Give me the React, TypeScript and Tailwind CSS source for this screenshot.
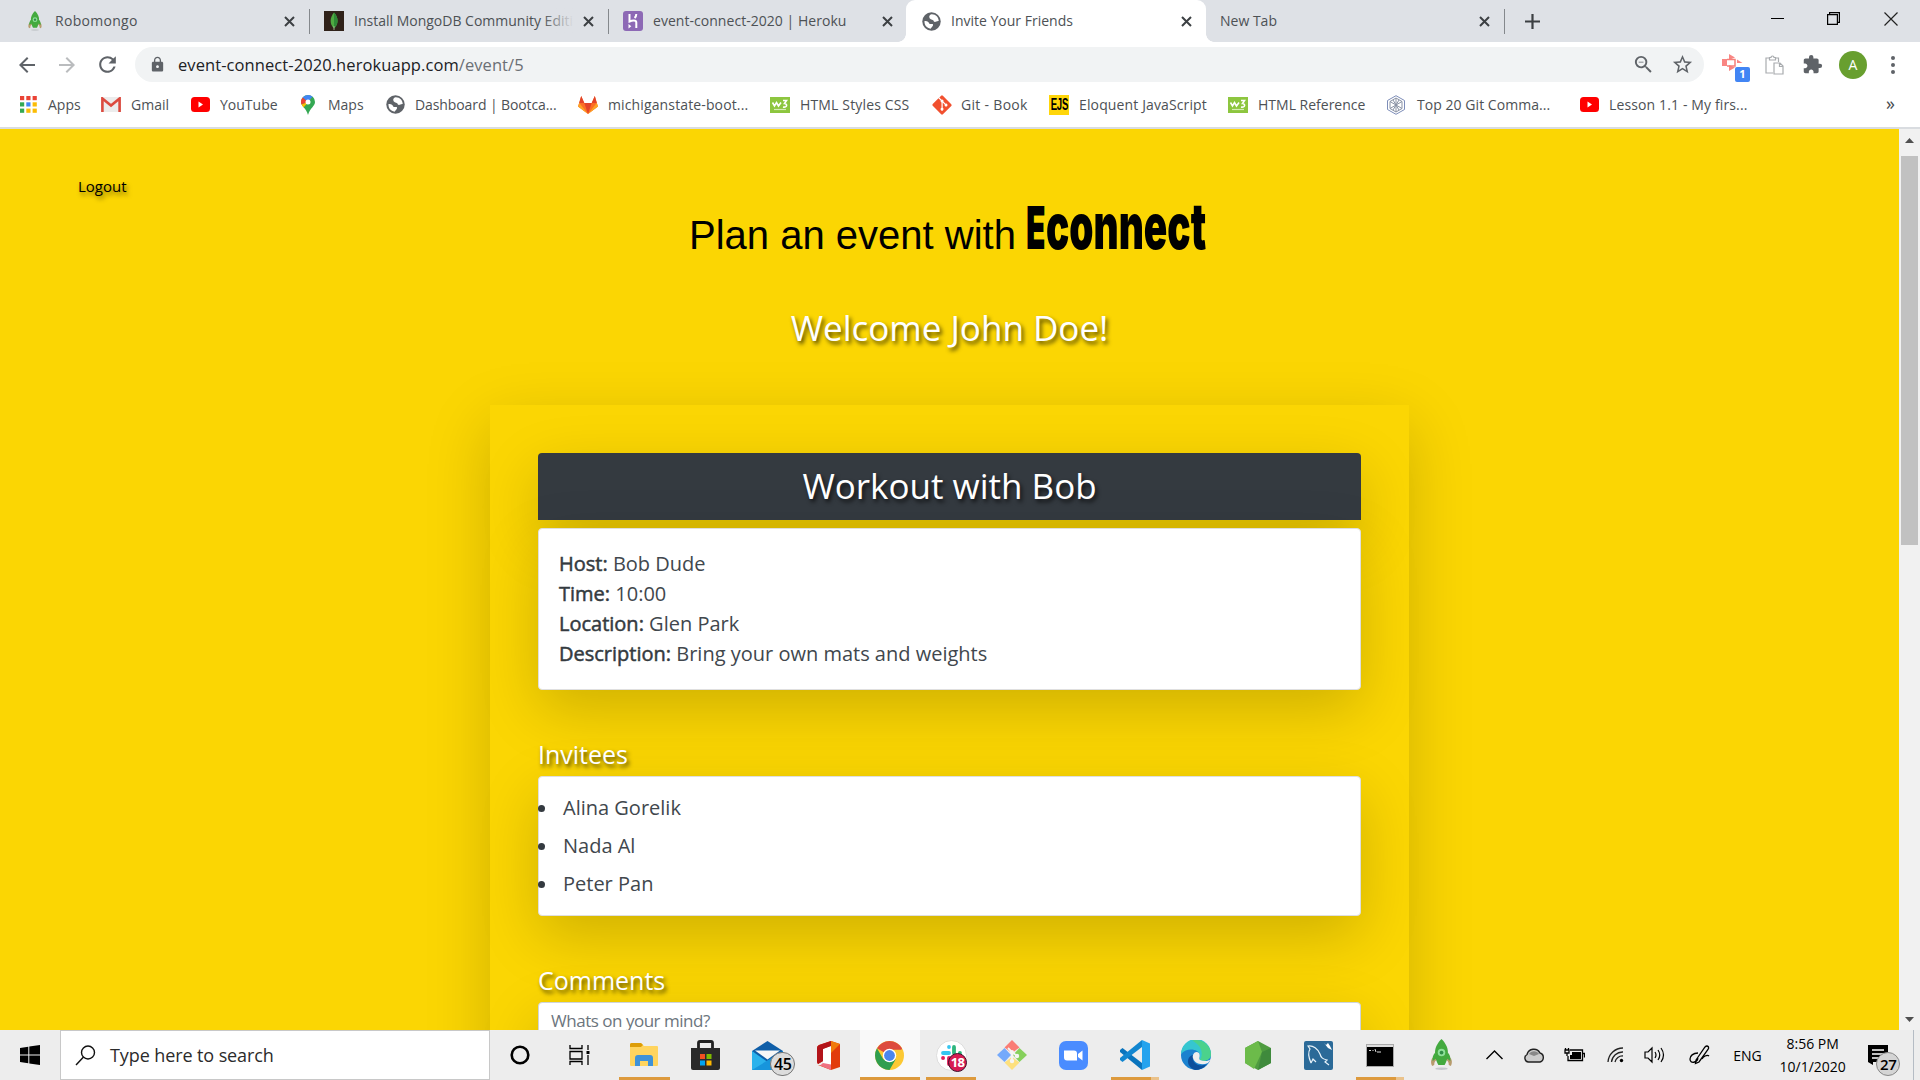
import type { ReactNode } from "react";
import { FaGitAlt } from "react-icons/fa";
import { MdExtension, MdLock, MdStarBorder, MdArrowBack, MdArrowForward, MdRefresh, MdOutlineZoomOut } from "react-icons/md";

function Rocket({ s = 22 }: { s?: number }) {
  return (
    <svg width={s} height={s * 1.25} viewBox="0 0 24 30">
      <ellipse cx="12" cy="28.5" rx="6" ry="1.2" fill="#c4c8cc" />
      <path d="M6 16C2 18 1 22 3 26L5 25C5 22 6 21 8 20ZM18 16C22 18 23 22 21 26L19 25C19 22 18 21 16 20Z" fill="#b79b6d" />
      <path d="M12 0C16 4 19 9 18 15C18 19 16 23 15 25H9C8 23 6 19 6 15C5 9 8 4 12 0Z" fill="#43aa3f" />
      <path d="M6 13C4 15 3 18 3.500 21L8 18ZM18 13C20 15 21 18 20.500 21L16 18Z" fill="#43aa3f" />
      <circle cx="12" cy="13" r="3.6" fill="#8fe09a" />
      <circle cx="12" cy="13" r="1.8" fill="#2f8f46" />
    </svg>
  );
}
function Globe() {
  return (
    <svg width="19" height="19" viewBox="0 0 20 20">
      <circle cx="10" cy="10" r="9.7" fill="#5f6368" />
      <path d="M2.6 9.5C5 9 7 10 8 12.500H11.500V14.500L9 17.500C5 17 2.400 14 2.600 9.500ZM10 2.400C8 3 7 4.500 8 6.500C9.500 8.500 12 7.500 12.500 10C14 11.500 15.500 9 17.600 9.500C17.500 5.500 14.500 2.200 10 2.400Z" fill="#fff" />
    </svg>
  );
}
function Heroku() {
  return (
    <svg width="20" height="20" viewBox="0 0 20 20">
      <rect width="20" height="20" rx="3" fill="#8d69b5" />
      <path d="M6.500 3V10.500C9 9.300 13.300 8.600 13.300 11.500V17M13.300 3C13.300 4.800 12.600 6 11.600 7" stroke="#fff" strokeWidth="2" fill="none" />
      <path d="M5.500 13L8.300 15.200L5.500 17.500Z" fill="#fff" />
    </svg>
  );
}
function MongoLeaf() {
  return (
    <svg width="20" height="20" viewBox="0 0 20 20">
      <rect width="20" height="20" fill="#30221a" />
      <path d="M10 1.500C15 7 14.500 13 10 17.500C5.500 13 5.500 7 10 1.500Z" fill="#4faa41" />
      <path d="M10 1.500C15 7 14.500 13 10 17.500Z" fill="#2f8a37" />
      <path d="M10 15V19" stroke="#b8c4a2" strokeWidth=".8" />
    </svg>
  );
}
const GitLab = () => (
  <svg width="20" height="18" viewBox="0 0 20 18">
    <path d="M10 18L0 10.500L3.200 0L6.300 7H13.700L16.800 0L20 10.500Z" fill="#fc6d26" />
    <path d="M10 18L6.300 7H13.700Z" fill="#e24329" />
    <path d="M0 10.500L1.300 7L10 18ZM20 10.500L18.700 7L10 18Z" fill="#fca326" />
    <path d="M3.200 0L6.300 7H1.200ZM16.800 0L18.800 7H13.700Z" fill="#e24329" />
  </svg>
);
const Close = () => (
  <svg width="11" height="11" viewBox="0 0 11 11" className="shrink-0">
    <path d="M1 1L10 10M10 1L1 10" stroke="#3c4043" strokeWidth="2" />
  </svg>
);
function AppsGrid() {
  const c = ["#ea4335", "#ea4335", "#ea4335", "#34a853", "#4285f4", "#fbbc05", "#34a853", "#fbbc05", "#fbbc05"];
  return (
    <svg width="17" height="17" viewBox="0 0 17 17">
      {c.map((f, i) => (
        <rect key={i} x={(i % 3) * 6.3} y={Math.floor(i / 3) * 6.3} width="4.2" height="4.2" fill={f} />
      ))}
    </svg>
  );
}
const Gmail = () => (
  <svg width="20" height="15" viewBox="0 0 20 15">
    <rect width="20" height="15" rx="1.5" fill="#ececec" />
    <path d="M1.400 15V1.500L10 8.500L18.600 1.500V15" stroke="#dc4a3f" strokeWidth="2.600" fill="none" />
  </svg>
);
const YouTube = () => (
  <svg width="19" height="15" viewBox="0 0 19 15">
    <rect width="19" height="15" rx="3.500" fill="#f00" />
    <path d="M7.500 4.500L12 7.500L7.500 10.500Z" fill="#fff" />
  </svg>
);
const MapPin = () => (
  <svg width="14" height="20" viewBox="0 0 14 20">
    <path d="M7 0A7 7 0 0 0 0 7C0 11 5 13 7 20C9 13 14 11 14 7A7 7 0 0 0 7 0Z" fill="#34a853" />
    <path d="M7 0A7 7 0 0 0 1.600 2.500L7 7L11.500 1.600A7 7 0 0 0 7 0Z" fill="#4285f4" />
    <path d="M1.600 2.500A7 7 0 0 0 .5 9.500L7 7Z" fill="#ea4335" />
    <path d="M.5 9.500L2.500 12.500L11 3L7 7Z" fill="#fbbc04" />
    <circle cx="7" cy="7" r="2.500" fill="#fff" />
  </svg>
);
const W3 = () => (
  <svg width="20" height="16" viewBox="0 0 20 16">
    <rect width="20" height="16" fill="#8dc63f" />
    <path d="M2.500 5.500L4.500 9L6.500 5.500L8.500 9L11 5.500M13 3.500H16.500L14.500 6.500C17.500 6.500 17.500 11 13 10" stroke="#fff" strokeWidth="1.600" fill="none" />
    <path d="M4 12.500H16" stroke="#d5ecb4" strokeWidth="1.200" />
  </svg>
);
const Ejs = () => (
  <span className="flex h-5 w-5 items-center justify-center bg-[#ffd60a] font-['Liberation_Sans'] text-[16px] font-bold tracking-[-0.5px] text-black">
    <span className="scale-x-[.6]">EJS</span>
  </span>
);
const Hex = () => (
  <svg width="20" height="20" viewBox="0 0 20 20" fill="none" stroke="#7d8db8" strokeWidth="1">
    <path d="M10 .7L18.500 5.500V14.500L10 19.300L1.500 14.500V5.500Z" />
    <path d="M10 3L16 6.500V13.500L10 17L4 13.500V6.500ZM10 3V17M4 6.500L16 13.500M16 6.500L4 13.500M7 5L13 15M13 5L7 15" stroke="#8b93a5" />
  </svg>
);

const tabText = "whitespace-nowrap text-[14px] leading-5 text-[#4d5155]";

function Tab({ icon, title, w, ls }: { icon?: ReactNode; title: string; w: string; ls: string }) {
  return (
    <div className={"flex h-[42px] shrink-0 items-center " + w}>
      {icon && <span className="mr-[10px] flex w-5 shrink-0 justify-center">{icon}</span>}
      <span className={"min-w-0 flex-1 overflow-hidden " + tabText + " " + ls}>{title}</span>
      <Close />
    </div>
  );
}
const Sep = ({ m }: { m: string }) => <span className={"h-[25px] w-px shrink-0 self-center bg-[#84888c] " + m} />;

function TabStrip() {
  return (
    <div className="flex h-[42px] items-center bg-[#dee1e6]">
      <Tab icon={<Rocket s={16} />} title="Robomongo" w="ml-[25px] w-[270px]" ls="tracking-[0.3px]" />
      <Sep m="ml-[14px]" />
      <div className="relative ml-[14px]">
        <Tab icon={<MongoLeaf />} title="Install MongoDB Community Edition" w="w-[270px]" ls="max-w-[219px] mr-[10px]" />
        <span className="absolute top-2 right-[20px] h-7 w-8 bg-gradient-to-r from-transparent to-[#dee1e6]" />
      </div>
      <Sep m="ml-[14px]" />
      <Tab icon={<Heroku />} title="event-connect-2020 | Heroku" w="ml-[14px] w-[270px]" ls="tracking-[0.04px]" />
      <div className="relative ml-[13px] h-[42px] w-[300px] rounded-t-[9px] bg-white pl-[15px]">
        <span className="absolute bottom-0 -left-[8px] h-2 w-2 bg-[radial-gradient(circle_at_0_0,transparent_7.500px,white_8px)]" />
        <span className="absolute -right-[8px] bottom-0 h-2 w-2 bg-[radial-gradient(circle_at_100%_0,transparent_7.500px,white_8px)]" />
        <Tab icon={<Globe />} title="Invite Your Friends" w="w-[271px]" ls="" />
      </div>
      <Tab title="New Tab" w="ml-[14px] w-[270px]" ls="" />
      <Sep m="ml-[14px]" />
      <svg width="15" height="15" viewBox="0 0 15 15" className="ml-[20px]">
        <path d="M7.500 0V15M0 7.500H15" stroke="#3c4043" strokeWidth="2.200" />
      </svg>
      <svg width="13" height="14" viewBox="0 0 13 14" className="ml-[231px] mb-[6px]">
        <path d="M0 7.500H13" stroke="#000" />
      </svg>
      <svg width="13" height="13" viewBox="0 0 13 13" className="ml-[43px] mb-[5px]" fill="none" stroke="#000" strokeWidth="1.200">
        <path d="M.6 2.600H10.400V12.400H.6ZM2.600 2.600V.6H12.400V10.400H10.400" />
      </svg>
      <svg width="14" height="14" viewBox="0 0 14 14" className="ml-[44px] mb-[5px]">
        <path d="M.5 .5L13.500 13.500M13.500 .5L.5 13.500" stroke="#222" strokeWidth="1.200" />
      </svg>
    </div>
  );
}

function AddressBar() {
  return (
    <div className="flex h-[45px] items-center bg-white text-[#5f6368]">
      <MdArrowBack className="ml-[15px]" size={24} />
      <MdArrowForward className="ml-[16px] text-[#babcbe]" size={24} />
      <MdRefresh className="ml-[16px]" size={25} />
      <div className="ml-[15px] flex h-[35px] w-[1569px] items-center rounded-full bg-[#f1f3f4] pl-[14px]">
        <MdLock size={17} />
        <span className="ml-[12px] flex-1 text-[16.5px] leading-6 tracking-[0.08px] text-[#202124]">
          event-connect-2020.herokuapp.com<span className="text-[#6b6f74]">/event/5</span>
        </span>
        <MdOutlineZoomOut size={23} className="mr-[16px]" />
        <MdStarBorder size={23} className="mr-[10px]" />
      </div>
      <div className="relative ml-[18px] h-[22px] w-[22px]">
        <svg width="21" height="18" viewBox="0 0 21 18" fill="none" stroke="#f57f7a">
          <path d="M0 5H5V12H0ZM7 0L13 3.500L7 6ZM7 17L13 13.500L7 11ZM15 5.500L20.500 9H15Z" fill="#f98683" stroke="none" />
          <path d="M5 5.500H13V12H5" strokeWidth="1.500" />
        </svg>
        <span className="absolute top-[13px] left-[13px] flex h-[15px] w-[15px] items-center justify-center rounded-[2px] bg-[#4285f4] text-[11px] font-bold text-white">1</span>
      </div>
      <svg width="19" height="20" viewBox="0 0 19 20" className="ml-[21px]" fill="none" stroke="#a9acaf" strokeWidth="1.200">
        <path d="M8 18H1V3H4.500M10 3H13.500V7M4.500 5V2.500H6A1.500 1.500 0 0 1 9 2.500H10.500V5ZM9 8H15L18 11V19H9ZM14.500 8V11.500H18" />
      </svg>
      <MdExtension size={21} className="ml-[18px]" />
      <span className="ml-[16px] flex h-[28px] w-[28px] items-center justify-center rounded-full bg-[#689f2f] text-[14px] text-white">A</span>
      <svg width="4" height="18" viewBox="0 0 4 18" className="ml-[24px]" fill="#5f6368">
        <circle cx="2" cy="2" r="2" />
        <circle cx="2" cy="9" r="2" />
        <circle cx="2" cy="16" r="2" />
      </svg>
    </div>
  );
}

const bookmarks: { icon: ReactNode; t: string; w: string; g: string; ls?: string }[] = [
  { icon: <AppsGrid />, t: "Apps", w: "w-[81px]", g: "w-[28px]" },
  { icon: <Gmail />, t: "Gmail", w: "w-[90px]", g: "w-[30px]" },
  { icon: <YouTube />, t: "YouTube", w: "w-[110px]", g: "w-[29px]" },
  { icon: <MapPin />, t: "Maps", w: "w-[85px]", g: "w-[27px]" },
  { icon: <Globe />, t: "Dashboard | Bootca...", w: "w-[192px]", g: "w-[29px]", ls: "tracking-[-0.1px]" },
  { icon: <GitLab />, t: "michiganstate-boot...", w: "w-[192px]", g: "w-[30px]", ls: "tracking-[0.13px]" },
  { icon: <W3 />, t: "HTML Styles CSS", w: "w-[161px]", g: "w-[30px]", ls: "tracking-[0.15px]" },
  { icon: <FaGitAlt size={22} color="#f1502f" />, t: "Git - Book", w: "w-[118px]", g: "w-[30px]", ls: "tracking-[0.3px]" },
  { icon: <Ejs />, t: "Eloquent JavaScript", w: "w-[179px]", g: "w-[30px]", ls: "tracking-[0.13px]" },
  { icon: <W3 />, t: "HTML Reference", w: "w-[158px]", g: "w-[30px]" },
  { icon: <Hex />, t: "Top 20 Git Comma...", w: "w-[194px]", g: "w-[31px]", ls: "tracking-[0.05px]" },
  { icon: <YouTube />, t: "Lesson 1.1 - My firs...", w: "w-[306px]", g: "w-[29px]", ls: "tracking-[0.13px]" },
];

function Bookmarks() {
  return (
    <div className="flex h-[42px] items-center border-b-2 border-[#d9dce0] bg-white pb-[5px] pl-5">
      {bookmarks.map((b, i) => (
        <div key={i} className={"flex shrink-0 items-center " + b.w}>
          <span className={"shrink-0 " + b.g}>{b.icon}</span>
          <span className={tabText + " " + (b.ls ?? "")}>{b.t}</span>
        </div>
      ))}
      <span className="mb-[3px] text-[18px] leading-5 text-[#45494d]">»</span>
    </div>
  );
}

const glow = "[text-shadow:2px_3px_4px_rgba(0,0,0,0.7)]";
const lg = "shadow-[0_20px_60px_rgba(0,0,0,0.175)]";
const details = [
  ["Host:", "Bob Dude"],
  ["Time:", "10:00"],
  ["Location:", "Glen Park"],
  ["Description:", "Bring your own mats and weights"],
];

function Page() {
  return (
    <div className="flex h-[901px] overflow-hidden bg-[#fbd603]">
      <main className="w-[1899px] overflow-hidden">
        <div className="h-[48px] pt-[47px] pl-[78px] text-[15px] leading-5 text-black">
          <span className="[text-shadow:2px_3px_4px_rgba(0,0,0,0.5)]">Logout</span>
        </div>
        <h1 className="mt-[18px] flex h-[80px] items-baseline justify-center font-['Liberation_Sans'] text-[40px] leading-[80px] whitespace-pre text-black">
          <span className="w-[337px]">Plan an event with</span>
          <span className="flex w-[184px] items-baseline font-['Inter'] leading-[60px] font-black">
            <span className="w-[20px]">
              <span className="inline-block origin-left scale-x-[.54] text-[59px] leading-[60px]">E</span>
            </span>
            <span className="w-[164px]">
              <span className="inline-block origin-left scale-x-[.605] text-[64px] leading-[60px]">connect</span>
            </span>
          </span>
        </h1>
        <h2 className={"mt-[26px] text-center text-[35px] leading-[53px] text-white " + glow}>Welcome John Doe!</h2>
        <div className={"mx-auto mt-[51px] h-[800px] w-[919px] bg-[#fbd603] p-12 " + lg}>
          <h2 className={"h-[67px] rounded-t-[4px] bg-[#343a40] text-center text-[35px] leading-[66px] text-white " + glow + " " + lg}>Workout with Bob</h2>
          <div className={"mt-2 h-[162px] rounded-[4px] border border-[#dfdfdf] bg-white pt-5 pl-[20px] text-[20px] leading-[30px] text-[#41474d] " + lg}>
            {details.map(([k, v]) => (
              <p key={k}>
                <span className="text-[#343a40] [-webkit-text-stroke:0.5px_#343a40]">{k}</span> {v}
              </p>
            ))}
          </div>
          <h3 className={"mt-[49px] text-[25px] leading-[30px] text-white " + glow}>Invitees</h3>
          <ul className={"mt-[7px] flex h-[140px] flex-col gap-2 rounded-[4px] border border-[#dfdfdf] bg-white pt-4 text-[20px] leading-[30px] text-[#41474d] " + lg}>
            {["Alina Gorelik", "Nada Al", "Peter Pan"].map((n) => (
              <li key={n} className="flex items-center">
                <span className="-ml-px mr-[18px] h-[7px] w-[7px] rounded-full bg-[#343a40]" />
                {n}
              </li>
            ))}
          </ul>
          <h3 className={"mt-[49px] text-[25px] leading-[30px] text-white " + glow}>Comments</h3>
          <div className={"mt-[7px] h-[80px] rounded-[4px] border border-[#ced4da] bg-white pt-[5px] pl-3 text-[17px] leading-[26px] tracking-[-0.48px] text-[#6c757d] " + lg}>Whats on your mind?</div>
        </div>
      </main>
      <div className="flex w-[21px] flex-col items-center bg-[#f1f1f1] py-[9px]">
        <svg width="9" height="5" viewBox="0 0 9 5" fill="#505050"><path d="M0 5L4.500 0L9 5Z" /></svg>
        <span className="mt-[13px] h-[389px] w-[17px] bg-[#c1c1c1]" />
        <svg width="9" height="5" viewBox="0 0 9 5" fill="#505050" className="mt-auto mb-[-1px]"><path d="M0 0L4.500 5L9 0Z" /></svg>
      </div>
    </div>
  );
}

const Badge = ({ n, c }: { n: string; c: string }) => (
  <span className={"absolute flex items-center justify-center rounded-full leading-none " + c}>{n}</span>
);
const Explorer = () => (
  <svg width="29" height="24" viewBox="0 0 29 24">
    <path d="M0 1.500Q0 0 1.500 0H11L14 3H27Q28 3 28 4V22Q28 23 27 23H1Q0 23 0 22Z" fill="#ffd45e" />
    <path d="M0 4V1.500Q0 0 1.500 0H11L13 2L11 4Z" fill="#dd9d07" />
    <path d="M5 23V15Q5 12 8 12H20Q23 12 23 15V23H18V18H10V23Z" fill="#3f92d8" />
  </svg>
);
const Store = () => (
  <svg width="30" height="31" viewBox="0 0 30 31">
    <path d="M7.500 9V3Q7.500 1.500 9 1.500H20Q21.500 1.500 21.500 3V9" stroke="#222" strokeWidth="2.800" fill="none" />
    <path d="M0 8H29V28Q29 30 27 30H2Q0 30 0 28Z" fill="#2a2a2a" />
    <path d="M9 14H14V19H9Z" fill="#f25022" /><path d="M15.500 14H20.500V19H15.500Z" fill="#7fba00" />
    <path d="M9 20.500H14V25.500H9Z" fill="#00a4ef" /><path d="M15.500 20.500H20.500V25.500H15.500Z" fill="#ffb900" />
  </svg>
);
const Mail = () => (
  <svg width="31" height="29" viewBox="0 0 31 29">
    <path d="M0 10L15.500 0L31 10V29H0Z" fill="#0f5ea8" />
    <path d="M0 10L17 22V29H0Z" fill="#2bb2ec" /><path d="M31 10L0 29H31Z" fill="#1795dc" />
    <path d="M3 9.500H28L15.500 18.500Z" fill="#f7f7f7" />
  </svg>
);
const Office = () => (
  <svg width="23" height="29" viewBox="0 0 23 29">
    <path d="M14 0L23 3V26L14 29L1 24L14 25V5L6 8V20L1 23Q0 22 0 20V7Q0 5 2 4Z" fill="#e23b0c" />
    <path d="M6 8L14 5V25L6 23Z" fill="#fff" />
    <path d="M14 0L23 3L14 12Z" fill="#f17a0a" />
    <path d="M14 0L2 4Q0 5 0 7V20Q0 22 1 23L6 20V8L14 5Z" fill="#b3141a" />
    <path d="M3 24.500L6 22L14 23.500V29Z" fill="#ef7080" />
  </svg>
);
const Chrome = () => (
  <svg width="29" height="29" viewBox="0 0 28 28">
    <circle cx="14" cy="14" r="14" fill="#fcc934" />
    <path d="M14 14L1.900 7A14 14 0 0 1 26.100 7L25.500 8.500H14Z" fill="#dd4b3e" />
    <path d="M1.900 7A14 14 0 0 0 14 28L20 17.500L14 20L8 17.500Z" fill="#2f9e4f" />
    <circle cx="14" cy="14" r="6.500" fill="#fff" /><circle cx="14" cy="14" r="5.200" fill="#4a86ee" />
  </svg>
);
const Slack = () => (
  <svg width="31" height="31" viewBox="0 0 31 31">
    <circle cx="15.500" cy="15.500" r="15" fill="#fff" stroke="#ddd" />
    <g strokeWidth="3.800" strokeLinecap="round">
      <path d="M13 7V7.100M7 13H13" stroke="#36c5f0" /><path d="M18 7V13M24 13H23.900" stroke="#2eb67d" />
      <path d="M18 18H24M18 23V24" stroke="#ecb22e" /><path d="M13 18V24M7 18H7.100" stroke="#e01e5a" />
    </g>
  </svg>
);
const GitExt = () => (
  <svg width="30" height="30" viewBox="0 0 30 30">
    <path d="M15 0L22.500 7.500L15 13L7.500 7.500Z" fill="#fa7c74" /><path d="M7.500 8L14 15L7.500 22L0 15Z" fill="#74a9fb" />
    <path d="M22.500 8L30 15L22.500 22L16 15Z" fill="#86d05c" /><path d="M15 17L22.500 22.500L15 30L7.500 22.500Z" fill="#fde07e" />
    <path d="M11 8L15 12V21M15 12L20 16" stroke="#f5f5f5" strokeWidth="1.800" fill="none" />
    <circle cx="15" cy="21" r="2.200" fill="#f5f5f5" /><circle cx="20" cy="16" r="2.200" fill="#f5f5f5" /><circle cx="15" cy="12" r="2" fill="#f5f5f5" />
  </svg>
);
const Zoom = () => (
  <svg width="29" height="29" viewBox="0 0 29 29">
    <rect width="29" height="29" rx="7" fill="#4a8cff" />
    <path d="M5 9.500H15Q18 9.500 18 12.500V19.500H8Q5 19.500 5 16.500ZM19 13L23.500 9.500V19.500L19 16Z" fill="#fff" />
  </svg>
);
const VsCode = () => (
  <svg width="30" height="30" viewBox="0 0 30 30">
    <path d="M0 10L2.500 8L22 23V30L0 12Z" fill="#0a74bd" /><path d="M0 20L2.500 22L22 7V0L0 18Z" fill="#1286d0" />
    <path d="M22 0L30 3.500V26.500L22 30Z" fill="#25a3ee" />
  </svg>
);
const Edge = () => (
  <svg width="30" height="30" viewBox="0 0 30 30">
    <circle cx="15" cy="15" r="15" fill="#1b82cf" />
    <path d="M0 14A15 15 0 0 1 30 14C30 20 24 22 19 20C17 19 19 18 19 15C18 9 6 7 0 14Z" fill="#36c6d0" />
    <path d="M15 0A15 15 0 0 1 30 14C30 20 24 22 19 20C23 13 20 5 11 .6Z" fill="#53d576" opacity=".75" />
    <path d="M12 15C10 23 18 28 26 24A15 15 0 0 1 14 30C4 26 6 16 12 15Z" fill="#0d4f9c" />
    <path d="M19 20C17 18 20 17 18 13C14 10 11 15 12 18C13 23 20 26 27 23L30 19C27 21.500 23 21.500 19 20Z" fill="#eee" />
  </svg>
);
const NodeIcon = () => (
  <svg width="26" height="29" viewBox="0 0 26 29">
    <path d="M13 0L26 7V22L13 29L0 22V7Z" fill="#4f9c40" /><path d="M13 0L17 11L9 28L0 22V7Z" fill="#6cbb4a" /><path d="M17 11L26 7V22L13 29Z" fill="#3f8a3c" />
  </svg>
);
const MySql = () => (
  <svg width="29" height="29" viewBox="0 0 29 29">
    <rect width="29" height="29" rx="2" fill="#2b6a98" />
    <path d="M7 22C4 15 4 11 6 8L4 5C9 4 14 8 16 13C17 17 19 18 23 19L21 21L25 24M7 22L9 18L12 21" stroke="#e8f3fa" strokeWidth="1.200" fill="none" />
    <path d="M20 2L22 4L24 2L26 5L28 9L24 7Z" fill="#fff" />
  </svg>
);
const Cmd = () => (
  <svg width="28" height="23" viewBox="0 0 28 23">
    <rect width="28" height="23" fill="#000" stroke="#aaa" strokeWidth="2" /><path d="M1 2H27" stroke="#ddd" strokeWidth="2" />
    <path d="M3 6.500H5M6.500 6.500H7.500M9 5L10 8M11 8H15" stroke="#ddd" strokeWidth="1" />
  </svg>
);

const apps: { el: ReactNode; run?: string; extra?: boolean; bg?: string }[] = [
  { el: <Explorer />, run: "w-[51px]" },
  { el: <Store /> },
  { el: <><Mail /><Badge n="45" c="top-[22px] left-[33px] h-[24px] w-[25px] border border-[#777] bg-[#dcdcdc] text-[16px] font-semibold tracking-[-0.5px] text-black" /></> },
  { el: <Office /> },
  { el: <Chrome />, run: "w-[60px]", bg: "bg-[#f9f9f9]" },
  { el: <><Slack /><Badge n="18" c="top-[23px] left-[27px] h-[19px] w-[19px] border border-[#3f0e2a] bg-[#d71b52] text-[13px] font-bold tracking-[-0.5px] text-white" /></>, run: "w-[50px]" },
  { el: <GitExt /> },
  { el: <Zoom /> },
  { el: <VsCode />, run: "w-[40px]", extra: true },
  { el: <Edge /> },
  { el: <NodeIcon /> },
  { el: <MySql /> },
  { el: <Cmd />, run: "w-[40px]", extra: true },
  { el: <Rocket s={25} /> },
];

function Taskbar() {
  return (
    <div className="flex h-[50px] items-center bg-[#ededed] text-black">
      <svg width="20" height="20" viewBox="0 0 20 20" className="ml-5">
        <path d="M0 3L8.300 1.800V9.600H0ZM9.300 1.600L20 0V9.600H9.300ZM0 10.500H8.300V18.200L0 17ZM9.300 10.500H20V20L9.300 18.400Z" />
      </svg>
      <div className="ml-5 flex h-[50px] w-[430px] items-center border border-[#c8c8c8] bg-white">
        <svg width="21" height="21" viewBox="0 0 21 21" className="ml-[14px]" fill="none" stroke="#111" strokeWidth="1.400">
          <circle cx="13" cy="7.500" r="6.500" /><path d="M8.500 12L1 20" />
        </svg>
        <span className="ml-[14px] text-[18px] tracking-[-0.1px] text-[#2b2b2b]">Type here to search</span>
      </div>
      <svg width="20" height="20" viewBox="0 0 20 20" className="ml-[20px]"><circle cx="10" cy="10" r="8.300" fill="none" stroke="#000" strokeWidth="2.600" /></svg>
      <svg width="21" height="20" viewBox="0 0 21 20" className="ml-[39px]" fill="none" stroke="#000" strokeWidth="1.300">
        <path d="M1 0V3.500H13V0M1 6.500H13V14H1ZM1 20V16.500H13V20M19 0V5M19 10V20" /><path d="M17.500 6H20.500V9H17.500Z" fill="#000" stroke="none" />
      </svg>
      <div className="ml-[24px] flex">
        {apps.map((a, i) => (
          <div key={i} className="flex w-[61.3px] justify-center">
            <div className={"relative flex h-[50px] w-[60px] shrink-0 items-center justify-center " + (a.bg ?? "")}>
              {a.el}
              {a.run && (
                <span className="absolute inset-x-0 bottom-0 flex justify-center">
                  <span className={"h-[3px] bg-[#dd9a3d] " + a.run} />
                  {a.extra && <span className="h-[3px] w-[8px] bg-[#eac28b]" />}
                </span>
              )}
            </div>
          </div>
        ))}
      </div>
      <div className="ml-[14px] flex items-center">
        <svg width="17" height="10" viewBox="0 0 17 10" fill="none" stroke="#000" strokeWidth="1.400"><path d="M.5 9L8.500 1L16.500 9" /></svg>
        <svg width="21" height="15" viewBox="0 0 21 15" className="ml-[21px]"><path d="M4.500 14A4 4 0 0 1 3 6.500A7 7 0 0 1 16 5A4.700 4.700 0 0 1 16 14Z" fill="#ccc" stroke="#222" strokeWidth="1.400" /><path d="M5 6A6 6 0 0 1 15 6L10 8Z" fill="#888" /></svg>
        <svg width="21" height="16" viewBox="0 0 21 16" className="ml-[19px]" fill="none" stroke="#000" strokeWidth="1.300"><path d="M6 3H18.500V13.500H4V9M18.500 6.500H20.500V10.500" /><path d="M8 5H17V12H6V8H8Z" fill="#000" stroke="none" /><path d="M1 3H5V6H1ZM3 6V9M1.500 1V3M4.500 1V3" /></svg>
        <svg width="17" height="16" viewBox="0 0 17 16" className="ml-[22px]" fill="none" stroke="#222" strokeWidth="1.300"><path d="M1 15A15 15 0 0 1 16 1M4.500 15A11 11 0 0 1 16 5M8 15A7.500 7.500 0 0 1 16 9" /><circle cx="14.500" cy="13.500" r="1.700" fill="#000" stroke="none" /></svg>
        <svg width="22" height="18" viewBox="0 0 22 18" className="ml-[20px]" fill="none" stroke="#000" strokeWidth="1.200"><path d="M1 6H4L8 2V16L4 12H1ZM11 6Q13 9 11 12M14 4Q17.500 9 14 14M17 2Q22 9 17 16" /></svg>
        <svg width="21" height="21" viewBox="0 0 21 21" className="ml-[23px]" fill="none" stroke="#000" strokeWidth="1.300"><path d="M7 15L16 2Q18 0 19.500 2Q20 3 19 4.500L10 17L6.500 18.500ZM9 8C4 8 1 11 1 14C1 19 8 18 9 13M13 14C14 12 18 9 20 11" /></svg>
      </div>
      <span className="ml-[23px] w-[46px] text-[14px]">ENG</span>
      <div className="w-[67px] text-center text-[14px] leading-[23px] tracking-[0px] whitespace-nowrap">
        <p>8:56 PM</p>
        <p>10/1/2020</p>
      </div>
      <div className="relative ml-[22px] h-[20px] w-[20px]">
        <svg width="21" height="20" viewBox="0 0 21 20"><path d="M0 0H20V17H5V20L0 17Z" /><path d="M4 5H16M4 9H16M4 13H11" stroke="#fff" strokeWidth="1.400" /></svg>
        <Badge n="27" c="top-[7px] left-[8px] h-[24px] w-[24px] border border-[#888] bg-[#d4d4d4] text-[15px] font-semibold tracking-[-0.5px]" />
      </div>
      <span className="ml-[25px] h-[50px] w-px bg-[#b5bcc4]" />
    </div>
  );
}

export default function App() {
  return (
    <div className="h-[1080px] w-[1920px] overflow-hidden bg-white font-['Open_Sans','Noto_Sans',sans-serif]">
      <TabStrip />
      <AddressBar />
      <Bookmarks />
      <Page />
      <Taskbar />
    </div>
  );
}
